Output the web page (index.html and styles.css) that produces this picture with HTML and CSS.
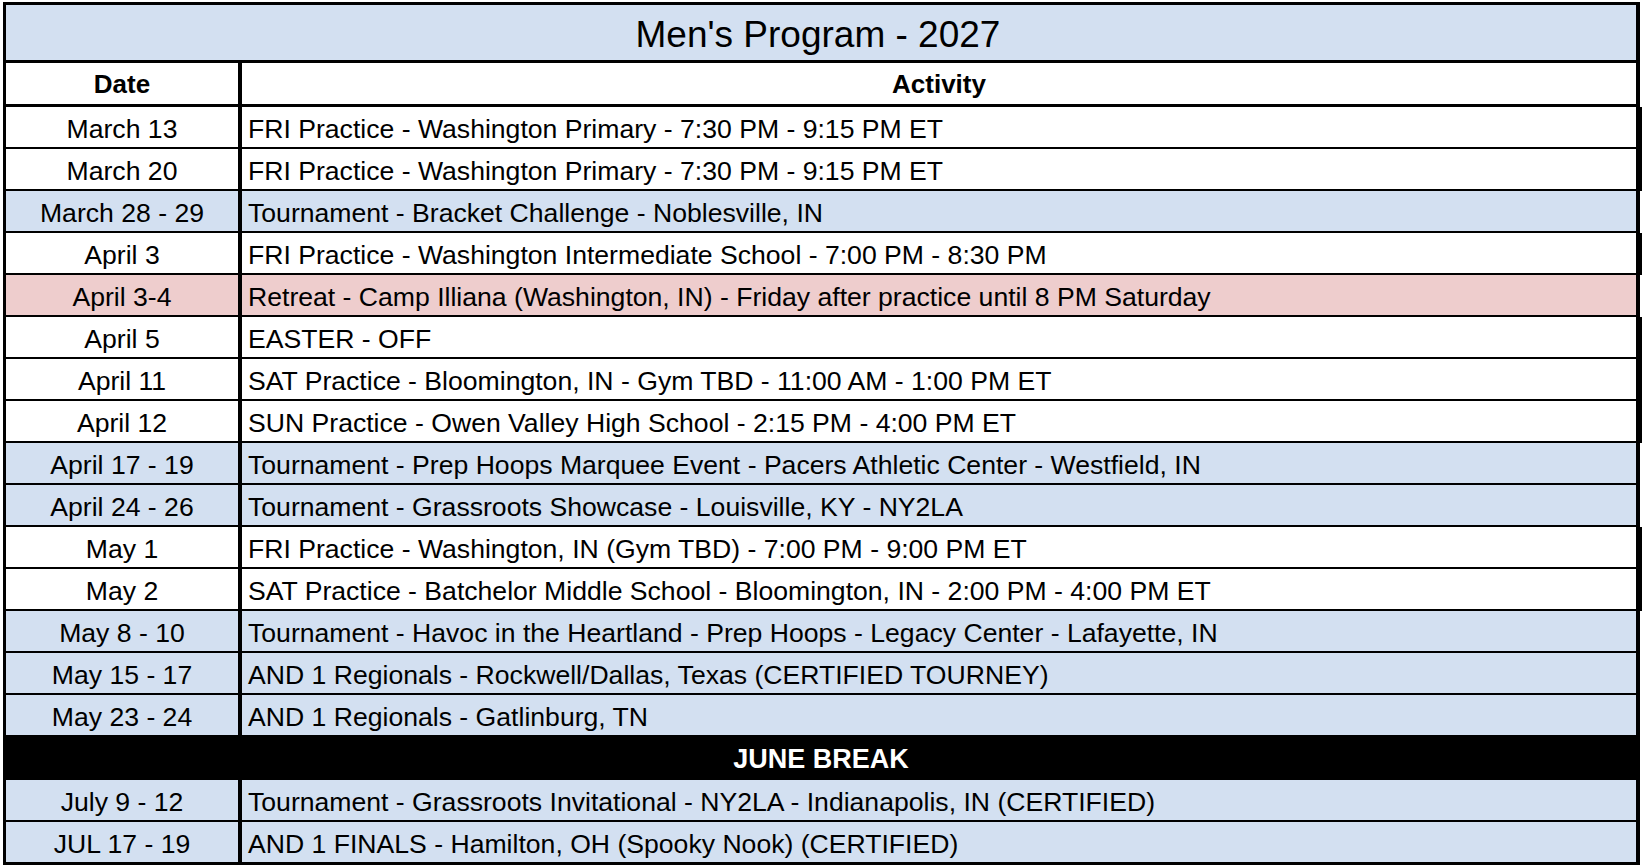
FILE: index.html
```html
<!DOCTYPE html>
<html lang="en">
<head>
<meta charset="utf-8">
<title>Men's Program - 2027</title>
<link rel="stylesheet" href="styles.css">
</head>
<body>
<div class="sheet">
  <div class="title">Men's Program - 2027</div>
  <div class="row head"><div class="date">Date</div><div class="act">Activity</div></div>
  <div class="row white"><div class="date">March 13</div><div class="act">FRI Practice - Washington Primary - 7:30 PM - 9:15 PM ET</div></div>
  <div class="row white"><div class="date">March 20</div><div class="act">FRI Practice - Washington Primary - 7:30 PM - 9:15 PM ET</div></div>
  <div class="row blue"><div class="date">March 28 - 29</div><div class="act">Tournament - Bracket Challenge - Noblesville, IN</div></div>
  <div class="row white"><div class="date">April 3</div><div class="act">FRI Practice - Washington Intermediate School - 7:00 PM - 8:30 PM</div></div>
  <div class="row pink"><div class="date">April 3-4</div><div class="act">Retreat - Camp Illiana (Washington, IN) - Friday after practice until 8 PM Saturday</div></div>
  <div class="row white"><div class="date">April 5</div><div class="act">EASTER - OFF</div></div>
  <div class="row white"><div class="date">April 11</div><div class="act">SAT Practice - Bloomington, IN - Gym TBD - 11:00 AM - 1:00 PM ET</div></div>
  <div class="row white"><div class="date">April 12</div><div class="act">SUN Practice - Owen Valley High School - 2:15 PM - 4:00 PM ET</div></div>
  <div class="row blue"><div class="date">April 17 - 19</div><div class="act">Tournament - Prep Hoops Marquee Event - Pacers Athletic Center - Westfield, IN</div></div>
  <div class="row blue"><div class="date">April 24 - 26</div><div class="act">Tournament - Grassroots Showcase - Louisville, KY - NY2LA</div></div>
  <div class="row white"><div class="date">May 1</div><div class="act">FRI Practice - Washington, IN (Gym TBD) - 7:00 PM - 9:00 PM ET</div></div>
  <div class="row white"><div class="date">May 2</div><div class="act">SAT Practice - Batchelor Middle School - Bloomington, IN - 2:00 PM - 4:00 PM ET</div></div>
  <div class="row blue"><div class="date">May 8 - 10</div><div class="act">Tournament - Havoc in the Heartland - Prep Hoops - Legacy Center - Lafayette, IN</div></div>
  <div class="row blue"><div class="date">May 15 - 17</div><div class="act">AND 1 Regionals - Rockwell/Dallas, Texas (CERTIFIED TOURNEY)</div></div>
  <div class="row blue"><div class="date">May 23 - 24</div><div class="act">AND 1 Regionals - Gatlinburg, TN</div></div>
  <div class="break">JUNE BREAK</div>
  <div class="row blue"><div class="date">July 9 - 12</div><div class="act">Tournament - Grassroots Invitational - NY2LA - Indianapolis, IN (CERTIFIED)</div></div>
  <div class="row blue last"><div class="date">JUL 17 - 19</div><div class="act">AND 1 FINALS - Hamilton, OH (Spooky Nook) (CERTIFIED)</div></div>
</div>
</body>
</html>
```

FILE: styles.css
```css
html, body {
  margin: 0;
  padding: 0;
  background: #ffffff;
}

body {
  padding: 2px 0 0 3px;
  font-family: "Liberation Sans", Arial, sans-serif;
  color: #000;
}

.sheet {
  width: 1637px;
  box-sizing: border-box;
  border-top: 3px solid #000;
  border-left: 3px solid #000;
  border-right: 4px solid #000;
  border-bottom: 3px solid #000;
}

.title {
  height: 55px;
  line-height: 59px;
  background: #d3e0f1;
  border-bottom: 3px solid #000;
  text-align: center;
  font-size: 37px;
  padding-right: 6px;
}

.row {
  display: grid;
  grid-template-columns: 236px 1fr;
  height: 40px;
  border-bottom: 2px solid #000;
  font-size: 26.6px;
  line-height: 44px;
  position: relative;
}

.row.head {
  height: 41px;
  border-bottom: 3px solid #000;
  font-weight: bold;
  font-size: 26px;
  background: #fff;
  line-height: 42px;
}

.row.last {
  border-bottom: 0;
}

.date {
  border-right: 4px solid #000;
  text-align: center;
  white-space: nowrap;
}

.act {
  padding-left: 6px;
  white-space: nowrap;
}

.head .act {
  text-align: center;
  padding-left: 0;
}

.white { background: #fff; }
.blue { background: #d3e0f1; }
.pink { background: #eecdcd; }

.row.white::after {
  content: "";
  position: absolute;
  top: 0;
  bottom: -2px;
  right: -6px;
  width: 2px;
  background: #000;
}

.break {
  height: 43px;
  background: #000;
  color: #fff;
  font-weight: bold;
  font-size: 27px;
  line-height: 44px;
  text-align: center;
}
```
